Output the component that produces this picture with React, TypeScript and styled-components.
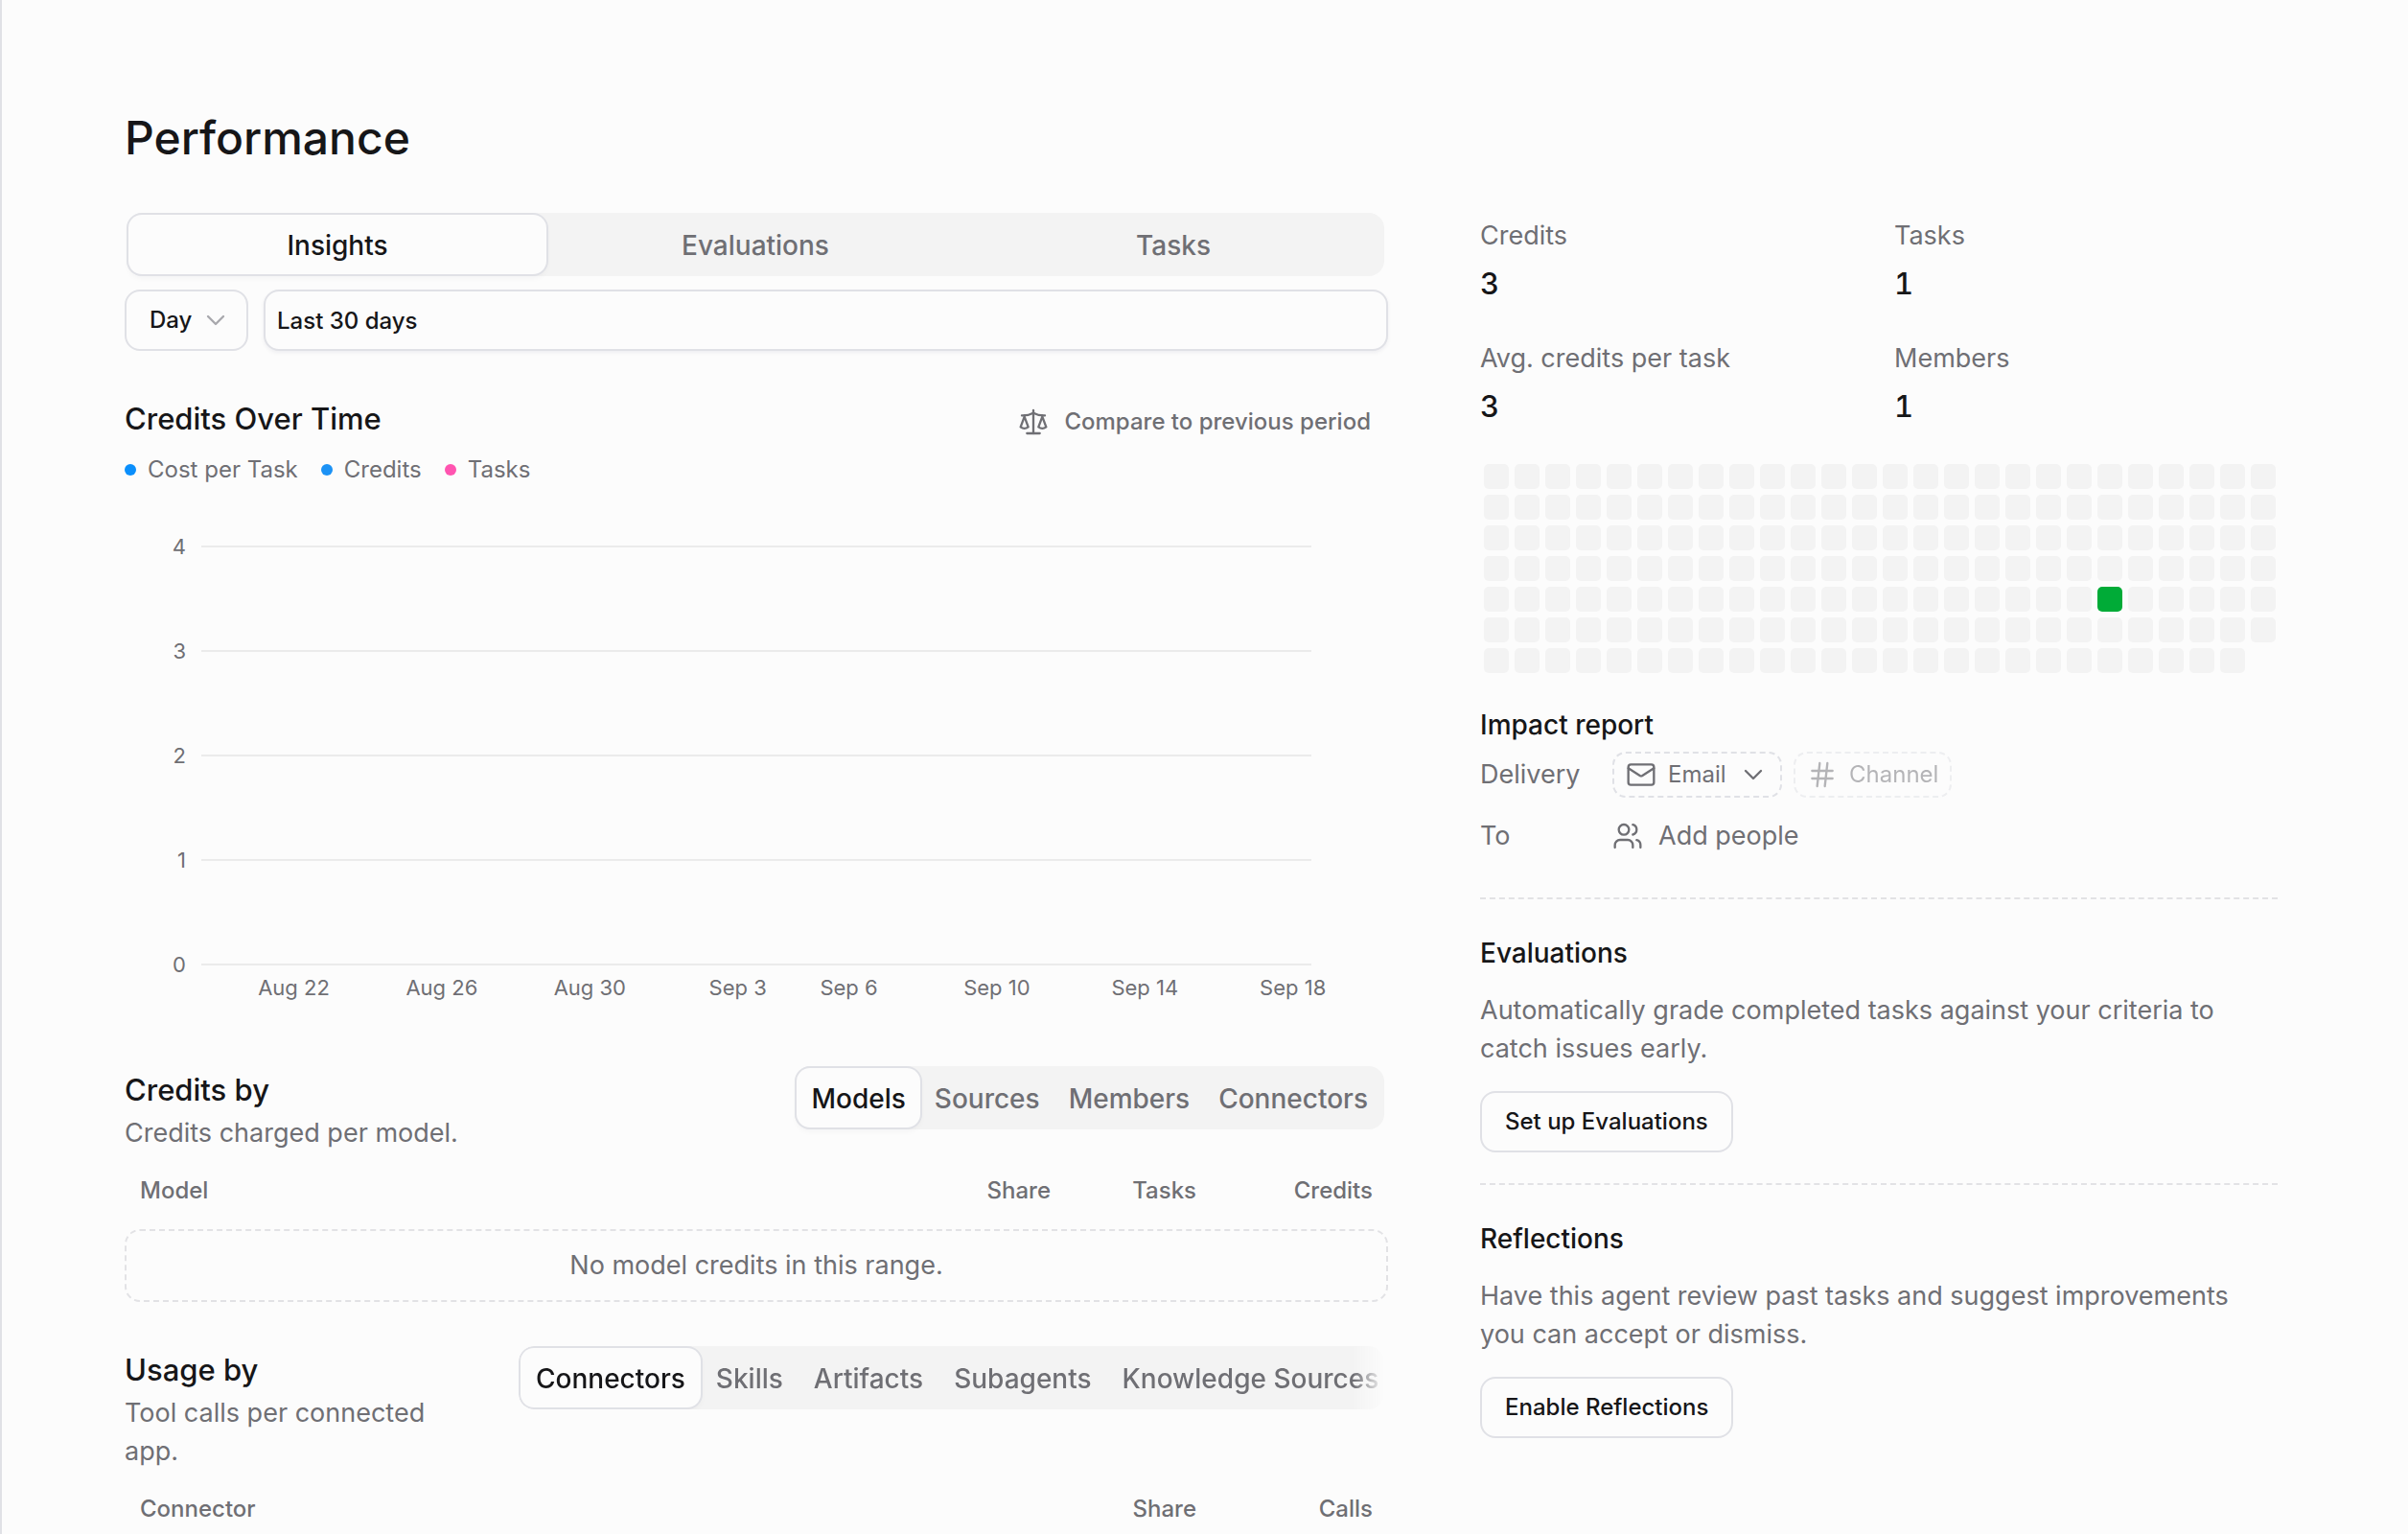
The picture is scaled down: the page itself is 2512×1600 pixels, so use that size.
import React, { useId, useState } from "react";
import styled, { createGlobalStyle, css } from "styled-components";
import { ChevronDown, Hash, Mail, Scale, Users } from "lucide-react";

const color = {
  page: "#fcfcfc",
  text: "#161618",
  muted: "#6f6f74",
  faint: "#a8a8ad",
  border: "#e0e1e6",
  dashed: "#e2e2e5",
  line: "#ebebeb",
  fill: "#f3f3f3",
  green: "#00ab37",
};

const GlobalStyle = createGlobalStyle`
  *, *::before, *::after { box-sizing: border-box; }
  body {
    margin: 0;
    background: ${color.page};
    color: ${color.text};
    font-family: Inter, "Liberation Sans", sans-serif;
    font-size: 27px;
    line-height: 40px;
    -webkit-font-smoothing: antialiased;
  }
  button, input, select { font: inherit; color: inherit; margin: 0; }
  h1, h2, h3, p, dl, dd, dt { margin: 0; font-weight: 400; }
`;

/* Page frame */

const Page = styled.main`
  height: 100vh;
  overflow-y: auto;
  scrollbar-width: none;
  border-left: 2px solid ${color.border};
  padding: 112px 136px 0 128px;
`;

const PageTitle = styled.h1`
  font-size: 48px;
  line-height: 64px;
  font-weight: 500;
  margin-bottom: 46px;
`;

const Columns = styled.div`
  display: grid;
  grid-template-columns: minmax(0, 1fr) 832px;
  column-gap: 96px;
  align-items: start;
`;

const Section = styled.section<{ $space: number }>`
  margin-top: ${(p) => p.$space}px;
`;

const SectionTitle = styled.h2`
  font-size: 31px;
  line-height: 42px;
  font-weight: 500;
`;

const BlockTitle = styled.h3`
  font-size: 28px;
  font-weight: 500;
`;

const Muted = styled.p`
  color: ${color.muted};
`;

/* Segmented tabs */

const TabList = styled.div<{ $fill?: boolean; $fade?: boolean }>`
  display: flex;
  height: 66px;
  margin: 0 4px 0 ${(p) => (p.$fill ? "2px" : "0")};
  padding: 2px;
  border-radius: 16px;
  background: ${color.fill};
  ${(p) =>
    p.$fade &&
    css`
      overflow: hidden;
      mask-image: linear-gradient(to left, transparent, #000 32px);
    `}
`;

const Tab = styled.button<{ $active: boolean; $fill?: boolean; $pad: number }>`
  flex: ${(p) => (p.$fill ? "1 1 0" : "0 0 auto")};
  padding: 2px ${(p) => p.$pad}px 0;
  border: 0;
  border-radius: 14px;
  background: ${(p) => (p.$active ? color.page : "transparent")};
  box-shadow: ${(p) =>
    p.$active ? `0 0 0 2px ${color.border}, 0 4px 6px rgba(20, 20, 60, 0.04)` : "none"};
  color: ${(p) => (p.$active ? color.text : color.muted)};
  font-size: 28px;
  font-weight: 500;
  white-space: nowrap;
`;

function Tabs({ label, items, fill, fade }: { label: string; items: string[]; fill?: boolean; fade?: boolean }) {
  const [active, setActive] = useState(items[0]);
  return (
    <TabList role="tablist" aria-label={label} $fill={fill} $fade={fade}>
      {items.map((item) => (
        <Tab
          key={item}
          role="tab"
          type="button"
          aria-selected={item === active}
          $active={item === active}
          $fill={fill}
          $pad={fade ? 16 : 15}
          onClick={() => setActive(item)}
        >
          {item}
        </Tab>
      ))}
    </TabList>
  );
}

/* Form controls */

const Filters = styled.div`
  display: flex;
  gap: 16px;
  margin-top: 14px;
`;

const SelectWrap = styled.span`
  position: relative;
  display: inline-flex;
  align-items: center;
  svg { position: absolute; pointer-events: none; }
`;

const IntervalSelect = styled.select`
  appearance: none;
  height: 64px;
  padding: 0 56px 0 24px;
  border: 2px solid ${color.border};
  border-radius: 16px;
  background: ${color.page};
  font-size: 24px;
  font-weight: 500;
`;

const SelectChevron = styled(ChevronDown)<{ $right: number }>`
  right: ${(p) => p.$right}px;
`;

const LeadingMail = styled(Mail)`
  left: 14px;
`;

const RangeInput = styled.input`
  flex: 1;
  min-width: 0;
  height: 64px;
  padding: 0 12px;
  border: 2px solid ${color.border};
  border-radius: 16px;
  background: ${color.page};
  box-shadow: 0 2px 4px rgba(20, 20, 60, 0.06);
  font-size: 24px;
  font-weight: 500;
`;

const OutlineButton = styled.button`
  height: 64px;
  padding: 0 24px;
  border: 2px solid ${color.border};
  border-radius: 16px;
  background: ${color.page};
  font-size: 24px;
  font-weight: 500;
`;

const GhostButton = styled.button`
  display: flex;
  align-items: center;
  gap: 16px;
  height: 68px;
  padding: 0 18px;
  border: 0;
  background: none;
  color: ${color.muted};
  font-size: 24px;
  font-weight: 500;
`;

/* Chart */

const ChartHead = styled.div`
  display: flex;
  justify-content: space-between;
  align-items: flex-start;
`;

const ChartHeading = styled.div`
  padding-top: 10px;
`;

const Legend = styled.ul`
  display: flex;
  gap: 24px;
  margin: 14px 0 0;
  padding: 0;
  list-style: none;
  color: ${color.muted};
  font-size: 24px;
  line-height: 36px;
`;

const LegendItem = styled.li<{ $color: string }>`
  display: flex;
  align-items: center;
  gap: 12px;
  &::before {
    content: "";
    width: 12px;
    height: 12px;
    border-radius: 50%;
    background: ${(p) => p.$color};
  }
`;

const Chart = styled.div`
  margin-top: 51px;
  padding-right: 80px;
  color: ${color.muted};
  font-size: 22px;
  line-height: 22px;
`;

const GridLines = styled.div`
  display: flex;
  flex-direction: column;
  gap: 87px;
`;

const GridLine = styled.div`
  display: flex;
  align-items: center;
  gap: 16px;
  &::after {
    content: "";
    flex: 1;
    height: 2px;
    background: ${color.line};
  }
`;

const Tick = styled.span`
  width: 64px;
  text-align: right;
`;

const DayAxis = styled.div`
  display: grid;
  grid-template-columns: repeat(30, minmax(0, 1fr));
  margin: 2px 0 0 80px;
`;

const DayLabel = styled.span<{ $day: number }>`
  grid-column: ${(p) => p.$day};
  grid-row: 1;
  justify-self: center;
  white-space: nowrap;
`;

/* Breakdown tables */

const BreakdownHead = styled.div`
  display: grid;
  grid-template-columns: minmax(347px, 1fr) minmax(0, max-content);
  column-gap: 64px;
  align-items: start;
`;

const BreakdownText = styled.div`
  display: grid;
  gap: 4px;
  padding-top: 4px;
`;

const Table = styled.table`
  width: 100%;
  margin-top: 8px;
  border-collapse: collapse;
  table-layout: fixed;
`;

const HeadCell = styled.th<{ $width?: number }>`
  width: ${(p) => (p.$width ? `${p.$width}px` : "auto")};
  height: 64px;
  padding: 0 16px;
  color: ${color.muted};
  font-size: 24px;
  font-weight: 500;
  text-align: ${(p) => (p.$width ? "right" : "left")};
`;

const EmptyCell = styled.td`
  padding: 8px 0 0;
`;

const Empty = styled.div`
  padding: 16px;
  border: 2px dashed ${color.dashed};
  border-radius: 16px;
  color: ${color.muted};
  text-align: center;
`;

type Column = { name: string; width?: number };

function Breakdown(props: {
  title: string;
  text: string;
  tabs: string[];
  fade?: boolean;
  columns: Column[];
  empty?: string;
  space: number;
}) {
  return (
    <Section $space={props.space}>
      <BreakdownHead>
        <BreakdownText>
          <SectionTitle>{props.title}</SectionTitle>
          <Muted>{props.text}</Muted>
        </BreakdownText>
        <Tabs label={props.title} items={props.tabs} fade={props.fade} />
      </BreakdownHead>
      <Table>
        <thead>
          <tr>
            {props.columns.map((c) => (
              <HeadCell key={c.name} scope="col" $width={c.width}>
                {c.name}
              </HeadCell>
            ))}
          </tr>
        </thead>
        {props.empty && (
          <tbody>
            <tr>
              <EmptyCell colSpan={props.columns.length}>
                <Empty>{props.empty}</Empty>
              </EmptyCell>
            </tr>
          </tbody>
        )}
      </Table>
    </Section>
  );
}

/* Side column */

const Side = styled.aside`
  padding-top: 4px;
`;

const Stats = styled.dl`
  display: grid;
  grid-template-columns: 1fr 1fr;
  gap: 36px 32px;
`;

const Stat = styled.div`
  display: grid;
  gap: 8px;
`;

const StatLabel = styled.dt`
  color: ${color.muted};
`;

const StatValue = styled.dd`
  font-size: 31px;
  line-height: 44px;
  font-weight: 500;
  font-variant-numeric: tabular-nums;
`;

const Heatmap = styled.div`
  display: grid;
  grid-template-rows: repeat(7, 26px);
  grid-auto-columns: 26px;
  grid-auto-flow: column;
  gap: 6px;
  margin: 38px 0 34px 4px;
`;

const HeatCell = styled.span<{ $on: boolean }>`
  border-radius: 5px;
  background: ${(p) => (p.$on ? color.green : color.fill)};
`;

const Report = styled.section`
  display: grid;
  padding-bottom: 8px;
`;

const ReportRow = styled.div`
  display: flex;
  align-items: center;
  gap: 12px;
  height: 48px;
  margin-top: 16px;
  ${BlockTitle} + & { margin-top: 8px; }
`;

const RowLabel = styled.label`
  flex: 0 0 126px;
  color: ${color.muted};
`;

const chip = css`
  height: 48px;
  border: 2px dashed ${color.border};
  border-radius: 14px;
  background: ${color.page};
  font-size: 24px;
`;

const ChipSelect = styled.select`
  ${chip}
  appearance: none;
  padding: 0 56px;
`;

const ChipWrap = styled(SelectWrap)`
  color: ${color.muted};
`;

const ChipButton = styled.button`
  ${chip}
  display: flex;
  align-items: center;
  gap: 12px;
  padding: 0 12px;
  color: ${color.muted};
  &:disabled { opacity: 0.5; }
`;

const AddPeople = styled.button`
  display: flex;
  align-items: center;
  gap: 16px;
  padding: 0;
  border: 0;
  background: none;
  color: ${color.muted};
`;

const Promo = styled.section`
  margin-top: 32px;
  padding-top: 36px;
  border-top: 2px dashed ${color.dashed};
  ${Muted} { margin: 20px 0 24px; }
`;

const icon = { size: 32, strokeWidth: 1.75, "aria-hidden": true } as const;

const days = [
  { day: 3, label: "Aug 22" },
  { day: 7, label: "Aug 26" },
  { day: 11, label: "Aug 30" },
  { day: 15, label: "Sep 3" },
  { day: 18, label: "Sep 6" },
  { day: 22, label: "Sep 10" },
  { day: 26, label: "Sep 14" },
  { day: 30, label: "Sep 18" },
];

const stats = [
  { label: "Credits", value: 3 },
  { label: "Tasks", value: 1 },
  { label: "Avg. credits per task", value: 3 },
  { label: "Members", value: 1 },
];

const ACTIVE_DAY = 20 * 7 + 4;
const heat = Array.from({ length: 181 }, (_, i) => i === ACTIVE_DAY);

export default function App() {
  const deliveryId = useId();
  const peopleId = useId();
  const [range, setRange] = useState("Last 30 days");

  return (
    <>
      <GlobalStyle />
      <Page>
        <PageTitle>Performance</PageTitle>
        <Columns>
          <div>
            <Tabs label="View" items={["Insights", "Evaluations", "Tasks"]} fill />
            <Filters>
              <SelectWrap>
                <IntervalSelect aria-label="Interval">
                  <option>Day</option>
                </IntervalSelect>
                <SelectChevron {...icon} color={color.faint} $right={18} />
              </SelectWrap>
              <RangeInput aria-label="Date range" value={range} onChange={(e) => setRange(e.target.value)} />
            </Filters>

            <Section $space={40}>
              <ChartHead>
                <ChartHeading>
                  <SectionTitle>Credits Over Time</SectionTitle>
                  <Legend>
                    <LegendItem $color="#0a8ffc">Cost per Task</LegendItem>
                    <LegendItem $color="#1c92f5">Credits</LegendItem>
                    <LegendItem $color="#ff54b0">Tasks</LegendItem>
                  </Legend>
                </ChartHeading>
                <GhostButton type="button">
                  <Scale {...icon} />
                  Compare to previous period
                </GhostButton>
              </ChartHead>
              <Chart>
                <GridLines>
                  {[4, 3, 2, 1, 0].map((n) => (
                    <GridLine key={n}>
                      <Tick>{n}</Tick>
                    </GridLine>
                  ))}
                </GridLines>
                <DayAxis>
                  {days.map((d) => (
                    <DayLabel key={d.label} $day={d.day}>
                      {d.label}
                    </DayLabel>
                  ))}
                </DayAxis>
              </Chart>
            </Section>

            <Breakdown
              space={71}
              title="Credits by"
              text="Credits charged per model."
              tabs={["Models", "Sources", "Members", "Connectors"]}
              columns={[
                { name: "Model" },
                { name: "Share", width: 152 },
                { name: "Tasks", width: 152 },
                { name: "Credits", width: 184 },
              ]}
              empty="No model credits in this range."
            />
            <Breakdown
              space={46}
              title="Usage by"
              text="Tool calls per connected app."
              tabs={["Connectors", "Skills", "Artifacts", "Subagents", "Knowledge Sources"]}
              fade
              columns={[{ name: "Connector" }, { name: "Share", width: 152 }, { name: "Calls", width: 184 }]}
            />
          </div>

          <Side>
            <Stats>
              {stats.map((s) => (
                <Stat key={s.label}>
                  <StatLabel>{s.label}</StatLabel>
                  <StatValue>{s.value}</StatValue>
                </Stat>
              ))}
            </Stats>
            <Heatmap>
              {heat.map((on, i) => (
                <HeatCell key={i} $on={on} />
              ))}
            </Heatmap>

            <Report>
              <BlockTitle>Impact report</BlockTitle>
              <ReportRow>
                <RowLabel htmlFor={deliveryId}>Delivery</RowLabel>
                <ChipWrap>
                  <LeadingMail {...icon} />
                  <ChipSelect id={deliveryId}>
                    <option>Email</option>
                  </ChipSelect>
                  <SelectChevron {...icon} $right={14} />
                </ChipWrap>
                <ChipButton type="button" disabled>
                  <Hash {...icon} />
                  Channel
                </ChipButton>
              </ReportRow>
              <ReportRow>
                <RowLabel htmlFor={peopleId}>To</RowLabel>
                <AddPeople id={peopleId} type="button">
                  <Users {...icon} />
                  Add people
                </AddPeople>
              </ReportRow>
            </Report>

            <Promo>
              <BlockTitle>Evaluations</BlockTitle>
              <Muted>Automatically grade completed tasks against your criteria to catch issues early.</Muted>
              <OutlineButton type="button">Set up Evaluations</OutlineButton>
            </Promo>
            <Promo>
              <BlockTitle>Reflections</BlockTitle>
              <Muted>Have this agent review past tasks and suggest improvements you can accept or dismiss.</Muted>
              <OutlineButton type="button">Enable Reflections</OutlineButton>
            </Promo>
          </Side>
        </Columns>
      </Page>
    </>
  );
}
